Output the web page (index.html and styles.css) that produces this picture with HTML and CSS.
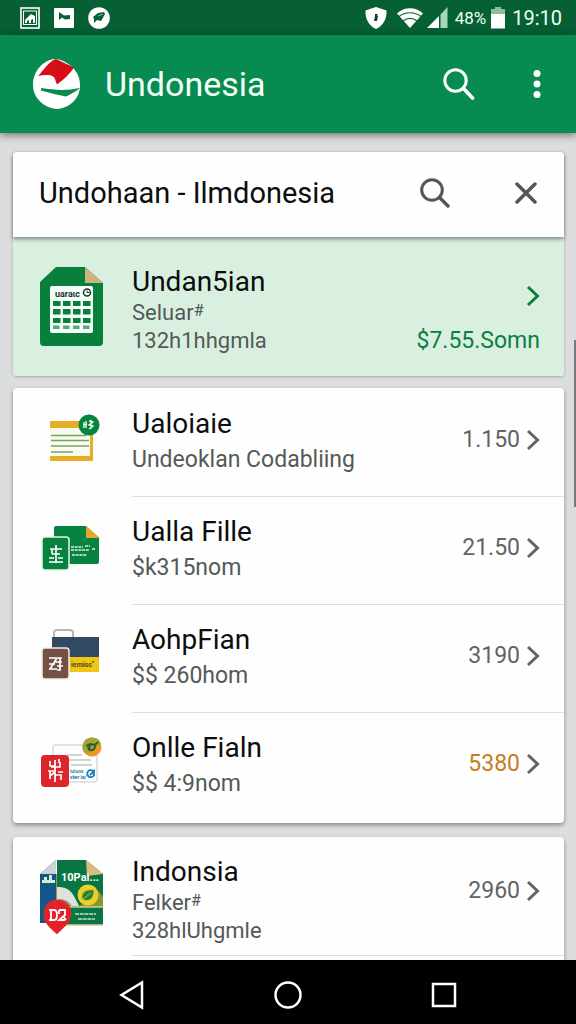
FILE: index.html
```html
<!DOCTYPE html>
<html lang="id">
<head>
<meta charset="utf-8">
<meta name="viewport" content="width=device-width, initial-scale=1">
<title>Undonesia</title>
<link rel="stylesheet" href="styles.css">
</head>
<body>
<div class="status">
  <div class="status-group status-left">
    <svg width="20" height="22" viewBox="0 0 20 22"><rect x="1" y="1" width="18" height="20" fill="none" stroke="#fff" stroke-width="1.6"/><rect x="3.500" y="4" width="13" height="13.500" fill="none" stroke="#fff"/><path d="M5 16v-3l4-4 2-2 4 2v7h-2v-4l-2 1v3H9v-3l-2 1v2z" fill="#fff"/></svg>
    <svg width="20" height="20" viewBox="0 0 20 20"><rect width="20" height="20" rx="1" fill="#fff"/><path d="M5 4l5 3.500 6-.5v4l-5 .5-3-2-3 2.500z" fill="#075f34"/></svg>
    <svg width="22" height="22" viewBox="0 0 22 22"><circle cx="11" cy="11" r="10.800" fill="#fff"/><path d="M5 10l5-4 6-1 1 2-4 7-4-1-3 3v-4z" fill="#075f34"/><path d="M10 9l5-2" stroke="#8cc4a3" stroke-width="1"/></svg>
  </div>
  <div class="status-group">
    <svg width="22" height="22" viewBox="0 0 22 22"><path d="M11 0L21.500 3.500C22 12 18 19 11 22 4 19 0 12 .5 3.500z" fill="#fff"/><path d="M10 7h3l-1 2h1l-1 5H9l1-5z" fill="#173c29"/></svg>
    <svg class="wifi" width="26" height="20" viewBox="0 0 26 20"><path d="M0 5.500C7-1.500 19-1.500 26 5.500L13 20z" fill="#fff"/><path d="M2 8.500c6-5 16-5 22 0M6 13c4-3.500 10-3.500 14 0" fill="none" stroke="#075f34" stroke-width="1.200"/></svg>
    <svg class="signal" width="21" height="21" viewBox="0 0 21 21"><path d="M0 21L12 9v12z" fill="#fff"/><path d="M13.500 7.500L20.500 0v21h-7z" fill="#a4d8b7"/></svg>
    <span class="percent">48%</span>
    <svg class="battery" width="14" height="22" viewBox="0 0 14 22"><path d="M4 0h6v2h4v6H0V2h4z" fill="#8abe9e"/><path d="M0 7h14v14.500H0z" fill="#fff"/></svg>
    <span class="clock">19:10</span>
  </div>
</div>

<header class="appbar">
  <svg class="logo" width="48" height="50" viewBox="0 0 48 50"><path d="M22 0C34 1 48 12 47 27c0 12-10 22-23 23C11 49 0 39 0 26 0 12 10 1 22 0z" fill="#fff"/><path d="M5 17C11 11 16 2 23 0l18 8.500c-4 6-10 12-17 17-2-5-2-8-6-9-4-.8-8-.5-13 .5z" fill="#d70d19"/><path d="M8 29c13 2 25 3 39 0-5 4-9 6-14 8.500C25 36 17 34 8 31.500z" fill="#0a8a4d"/></svg>
  <h1 class="app-title">Undonesia</h1>
  <button class="icon-button" type="button" aria-label="Search"><svg width="32" height="32" viewBox="0 0 32 32" fill="none" stroke="#fff" stroke-linecap="round"><circle cx="12.500" cy="12.500" r="10.700" stroke-width="3"/><path d="M20.500 20.500l9 9.500" stroke-width="3.600"/></svg></button>
  <button class="icon-button" type="button" aria-label="More options"><svg width="8" height="28" viewBox="0 0 8 28" fill="#fff"><circle cx="4" cy="3.500" r="3.500"/><circle cx="4" cy="14" r="3.500"/><circle cx="4" cy="24.500" r="3.500"/></svg></button>
</header>

<main class="content">
  <section class="card">
    <form class="search">
      <input class="search-input" type="text" aria-label="Search" value="Undohaan - Ilmdonesia">
      <button class="icon-button" type="button" aria-label="Find"><svg width="30" height="30" viewBox="0 0 30 30" fill="none" stroke="#555" stroke-linecap="round"><circle cx="12" cy="12" r="10.300" stroke-width="3"/><path d="M19.500 19.500l8.500 8.500" stroke-width="3.300"/></svg></button>
      <button class="icon-button" type="button" aria-label="Clear"><svg width="22" height="22" viewBox="0 0 22 22" stroke="#555" stroke-width="3.500" stroke-linecap="round"><path d="M2 2l18 18M20 2L2 20"/></svg></button>
    </form>
    <a class="item item-tall item-featured" href="#">
      <svg class="item-icon" width="64" height="80" viewBox="0 0 64 80"><path d="M16 0h29l18 16v59a4 4 0 0 1-4 4H4a4 4 0 0 1-4-4V15z" fill="#087f3b"/><path d="M45 0l18 16H45z" fill="#cdb580"/><rect x="10" y="19" width="43" height="47" rx="2" fill="#f4fff7"/><text x="15" y="30" font-size="9" font-weight="700" class="icon-text" fill="#23352a">uaraɩc</text><circle cx="47" cy="25.500" r="3.500" fill="none" stroke="#23352a" stroke-width="1.500"/><path d="M47 23.500v2h2.500" fill="none" stroke="#23352a"/><path d="M13 34h7.500v5H13zm10 0h7.500v5H23zm10 0h7.500v5H33zm10 0h7.500v5H43zM13 42h7.500v5.500H13zm10 0h7.500v5.500H23zm10 0h7.500v5.500H33zm10 0h7.500v5.500H43zM13 51h7.500v5H13zm10 0h7.500v5H23zm10 0h7.500v5H33zm10 0h7.500v5H43z" fill="#087f3b"/><path d="M13 58.500h6.500V62H13zm10 0h6.500V62H23zm10 0h6.500V62H33zm10 0h6.500V62H43z" fill="#58a878"/></svg>
      <span class="item-text"><span class="item-title">Undan5ian</span><span class="item-sub">Seluar<span class="hash">#</span></span><span class="item-sub">132h1hhgmla</span></span>
      <span class="item-side"><svg class="chevron" width="14" height="22" viewBox="0 0 14 22"><path d="M2 2l9.500 9L2 20"/></svg><span class="price">$7.55.Somn</span></span>
    </a>
  </section>

  <ul class="card list">
    <li><a class="item" href="#">
      <svg class="item-icon" width="64" height="54" viewBox="0 0 64 54"><rect x="10" y="8" width="43" height="40" fill="#f8fbed"/><path d="M10 8h33v7H10zM10 43h43v5H10zM50 22h3v24h-3z" fill="#e4ae25"/><path d="M11 22.500h35M11 27.500h38M11 33h38M11 39h22" stroke="#75a566" stroke-width="1.500"/><circle cx="49" cy="12" r="10.500" fill="#07843f"/><path d="M44 9v6m-1-3l4-1m-1-3v7m3-7l4 1-4 3 4 1-4 3m2-9v9" fill="none" stroke="#eaffee" stroke-width="1.300"/></svg>
      <span class="item-text"><span class="item-title">Ualoiaie</span><span class="item-sub">Undeoklan Codabliing</span></span>
      <span class="item-side"><span class="price">1.150</span><svg class="chevron" width="14" height="22" viewBox="0 0 14 22"><path d="M2 2l9.500 9L2 20"/></svg></span></a></li>
    <li><a class="item" href="#">
      <svg class="item-icon" width="64" height="54" viewBox="0 0 64 54"><path d="M16 5h30l13 12v24a2 2 0 0 1-2 2H16a2 2 0 0 1-2-2V7a2 2 0 0 1 2-2z" fill="#078341"/><path d="M46 5l14 12H46z" fill="#e5a62c"/><path d="M31 26h12m2-1h5M31 29h18m3-1h3M32 34h15" stroke="#d9f0df" stroke-width="1.500" stroke-dasharray="3 .7"/><rect x="2" y="16" width="27" height="33" rx="3" fill="#078341" stroke="#e8f4eb" stroke-width="1.500"/><path d="M16 24v18M10 28h12M12 33h8M9 37h5m4 0h5M9 41h14M12 28v5" fill="none" stroke="#fff" stroke-width="1.600"/></svg>
      <span class="item-text"><span class="item-title">Ualla Fille</span><span class="item-sub">$k315nom</span></span>
      <span class="item-side"><span class="price">21.50</span><svg class="chevron" width="14" height="22" viewBox="0 0 14 22"><path d="M2 2l9.500 9L2 20"/></svg></span></a></li>
    <li><a class="item" href="#">
      <svg class="item-icon" width="64" height="54" viewBox="0 0 64 54"><path d="M14 12V4a3 3 0 0 1 3-3h13a3 3 0 0 1 3 3v6" fill="none" stroke="#b1b8bc" stroke-width="2"/><rect x="12" y="8" width="47" height="20" fill="#304a62"/><path d="M12 28h47v15H12z" fill="#f0c516"/><text x="31" y="38" font-size="7" font-weight="700" class="icon-text" fill="#514515">iemisc"</text><rect x="2" y="19" width="27" height="31" rx="3" fill="#765047" stroke="#f2ecea" stroke-width="1.500"/><path d="M9 29h8l-7 11h7M17 29h5m-7 4h7m-5 4h6m-6 4h4m-1-12v12M9 35h6" fill="none" stroke="#fff" stroke-width="1.700"/></svg>
      <span class="item-text"><span class="item-title">AohpFian</span><span class="item-sub">$$ 260hom</span></span>
      <span class="item-side"><span class="price">3190</span><svg class="chevron" width="14" height="22" viewBox="0 0 14 22"><path d="M2 2l9.500 9L2 20"/></svg></span></a></li>
    <li><a class="item" href="#">
      <svg class="item-icon" width="64" height="54" viewBox="0 0 64 54"><rect x="13" y="8" width="44" height="37" rx="3" fill="#fff" stroke="#d7dcda" stroke-width="1.500"/><path d="M27 18h15M29 23h22M31 28h21" stroke="#a2a7a5" stroke-width="1.200"/><text x="30" y="36" font-size="5" font-weight="700" class="icon-text" fill="#3d86aa">iuiuox</text><text x="30" y="42" font-size="5" font-weight="700" class="icon-text" fill="#286f9a">viwr ia/</text><path d="M53 34a3.500 3.500 0 1 0 1 4M50 38l4-4v5" fill="none" stroke="#167cba" stroke-width="1.800"/><circle cx="52" cy="10" r="9.500" fill="#ef9629"/><path d="M43 7a9.500 9.500 0 0 1 18 0L46 17a9 9 0 0 1-3-10z" fill="#a3a536"/><path d="M46 9l4-2 5 1 3-3M48 10c1 5 7 4 7-1M50 7l-1 6" fill="none" stroke="#255d31" stroke-width="1.800"/><rect x="1" y="18" width="28" height="32" rx="4" fill="#dc262c"/><path d="M15 23v22M10 24v5h5M20 25v5h-9M8 34h6m4 1h5M10 39l5-4m-5-1v8m5-4h6v5M19 22v4" fill="none" stroke="#fff" stroke-width="1.700"/></svg>
      <span class="item-text"><span class="item-title">Onlle Fialn</span><span class="item-sub">$$ 4:9nom</span></span>
      <span class="item-side"><span class="price price-alert">5380</span><svg class="chevron" width="14" height="22" viewBox="0 0 14 22"><path d="M2 2l9.500 9L2 20"/></svg></span></a></li>
  </ul>

  <ul class="card list">
    <li><a class="item item-tall item-last" href="#">
      <svg class="item-icon" width="64" height="76" viewBox="0 0 64 76"><path d="M16 0v63H0V14z" fill="#14568a"/><path d="M16 0v14H0z" fill="#cbd3d4"/><path d="M16 14h2v49h-2z" fill="#b08c4c"/><path d="M4 22v-5h3v5zm5-7h3v7H9z" fill="#d7edcd"/><path d="M2 20h13v3H2z" fill="#d7edcd"/><path d="M17 0h29l17 14v51H17z" fill="#087542"/><path d="M46 0l17 14-16 2z" fill="#d9bd83"/><path d="M17 27c12 0 15 4 22 19H17z" fill="#dfe1dc"/><path d="M18 39c9 0 12 4 14 8H18z" fill="#938780"/><path d="M53 30c5 0 8 3 10 7v10H36c8-2 14-9 17-17z" fill="#809c2c"/><path d="M17 47h46M17 65h46" stroke="#d9c99b" stroke-width="1.300"/><circle cx="48" cy="35" r="10.500" fill="#f1cd28"/><path d="M42 39c-1-7 4-10 12-9 0 8-4 12-10 10zM43 39l8-6" fill="#267f3a" stroke="#d0cc32" stroke-width=".8"/><text x="21" y="21" font-size="11" font-weight="700" class="icon-text" fill="#fff">10Pai...</text><path d="M35 54h21M38 59h17" stroke="#c5dfcd" stroke-width="1.600" stroke-dasharray="4 .7"/><path d="M17 40c9 0 15 7 14 15 0 7-8 13-14 19C10 68 3 62 4 54c0-8 5-14 13-14z" fill="#e32126" stroke="#c93a31" stroke-width=".6"/><path d="M9 50h5c4 0 4 10 0 10H9m2-10v10m8-10h6v5l-6 5h6m-6-10v4m4 2l3 4" fill="none" stroke="#fff" stroke-width="1.800"/></svg>
      <span class="item-text"><span class="item-title">Indonsia</span><span class="item-sub">Felker<span class="hash">#</span></span><span class="item-sub">328hlUhgmle</span></span>
      <span class="item-side"><span class="price">2960</span><svg class="chevron" width="14" height="22" viewBox="0 0 14 22"><path d="M2 2l9.500 9L2 20"/></svg></span></a></li>
    <li><a class="item" href="#" aria-label="Next item"></a></li>
  </ul>
  <div class="scroll-thumb"></div>
</main>

<nav class="navbar" aria-label="System">
  <button class="nav-button" type="button" aria-label="Back"><svg width="26" height="30" viewBox="0 0 26 30"><path d="M23 2.500v25L2.500 15z"/></svg></button>
  <button class="nav-button" type="button" aria-label="Home"><svg width="30" height="30" viewBox="0 0 30 30"><circle cx="15" cy="15" r="12.500"/></svg></button>
  <button class="nav-button" type="button" aria-label="Recent"><svg width="26" height="26" viewBox="0 0 26 26"><rect x="2" y="2" width="22" height="22"/></svg></button>
</nav>
</body>
</html>
```
FILE: styles.css
```css
* { box-sizing: border-box; }

body {
  margin: 0;
  height: 100vh;
  display: flex;
  flex-direction: column;
  background: #dcdddf;
  color: #0c0d0d;
  font-family: Roboto, "Liberation Sans", sans-serif;
}

svg { display: block; flex: none; }

button {
  padding: 0;
  border: 0;
  background: none;
  cursor: pointer;
}

.status {
  flex: none;
  height: 35px;
  padding: 0 14px 0 20px;
  display: flex;
  justify-content: space-between;
  align-items: center;
  background: #075f34;
  color: #eefff4;
}

.status-group { display: flex; align-items: center; }
.status-left { gap: 14px; }
.wifi { margin-left: 10px; }
.signal { margin-left: 4px; }
.percent { margin-left: 7px; font-size: 17px; }
.battery { margin-left: 5px; }
.clock { margin-left: 7px; font-size: 20px; }

.appbar {
  flex: none;
  position: relative;
  z-index: 1;
  height: 98px;
  padding: 0 18px 0 33px;
  display: flex;
  align-items: center;
  background: #088b50;
  box-shadow: 0 2px 8px rgba(0, 0, 0, 0.5);
}

.app-title {
  flex: 1;
  margin: 0 0 0 24px;
  font-size: 34px;
  font-weight: 400;
  color: #f4fff8;
}

.icon-button {
  flex: none;
  width: 42px;
  height: 48px;
  display: flex;
  align-items: center;
  justify-content: center;
}

.icon-button + .icon-button { margin-left: 36px; }

.content {
  flex: 1;
  min-height: 0;
  overflow: hidden;
  position: relative;
  padding: 19px 12px 0 13px;
}

.card {
  margin: 0 0 12px;
  border-radius: 4px;
  background: #fefefe;
  box-shadow: 0 2px 4px rgba(0, 0, 0, 0.4);
}

.card:first-child { box-shadow: 0 1px 3px rgba(0, 0, 0, 0.25); }

.list {
  padding: 0 0 3px;
  list-style: none;
}

.list + .list { margin-top: 14px; }

.search {
  position: relative;
  height: 85px;
  padding: 0 17px 4px 26px;
  display: flex;
  align-items: center;
  border-radius: 4px 4px 0 0;
  background: #fefefe;
  box-shadow: 0 2px 4px rgba(0, 0, 0, 0.45);
}

.search .icon-button + .icon-button { margin-left: 49px; }

.search-input {
  flex: 1;
  min-width: 0;
  padding: 0;
  border: 0;
  outline: 0;
  background: none;
  color: #0c0d0d;
  font-family: inherit;
  font-size: 29px;
}

.item {
  min-height: 108px;
  padding: 0 24px 0 27px;
  display: flex;
  align-items: center;
  color: inherit;
  text-decoration: none;
}

.item-icon {
  margin-right: 28px;
  margin-bottom: 4px;
}

.item-text {
  flex: 1;
  display: flex;
  flex-direction: column;
}

.item-title {
  font-size: 28px;
  line-height: 36px;
}

.item-sub {
  font-size: 23px;
  line-height: 36px;
  color: #555957;
}

.item-tall .item-title { line-height: 34px; }

.item-tall .item-sub {
  font-size: 22px;
  line-height: 28px;
}

.item-tall .hash {
  font-size: 16px;
  line-height: 1;
  vertical-align: 4px;
}

.item-featured {
  padding-top: 28px;
  padding-bottom: 21px;
  border-radius: 0 0 4px 4px;
  background: #d9f0e1;
}

.item-featured .item-icon { margin-bottom: 6px; }

.item-last {
  padding-top: 18px;
  padding-bottom: 10px;
}

.item-side {
  padding-bottom: 4px;
  display: flex;
  align-items: center;
  gap: 6px;
}

.item-last .item-side { padding-bottom: 18px; }

.item-featured .item-side {
  padding-bottom: 0;
  align-self: stretch;
  flex-direction: column;
  align-items: flex-end;
  justify-content: flex-end;
  gap: 20px;
}

.price {
  font-size: 23px;
  line-height: 28px;
  color: #626463;
}

.price-alert { color: #c67d20; }
.item-featured .price { color: #0b7f3f; }

.chevron {
  fill: none;
  stroke: #626463;
  stroke-width: 3;
}

.item-featured .chevron { stroke: #0b7f3f; }

.list li + li {
  background: linear-gradient(#dddfde, #dddfde) 119px 0 / 100% 1px no-repeat;
}

.icon-text { font-family: Roboto, "Liberation Sans", sans-serif; }

.scroll-thumb {
  position: absolute;
  top: 207px;
  right: 0;
  width: 2px;
  height: 167px;
  background: #77797a;
}

.navbar {
  flex: none;
  height: 64px;
  padding: 6px 54px 0;
  display: grid;
  grid-template-columns: repeat(3, 1fr);
  background: #000;
}

.nav-button {
  display: flex;
  align-items: center;
  justify-content: center;
  fill: none;
  stroke: #fff;
  stroke-width: 2.5;
}
```
